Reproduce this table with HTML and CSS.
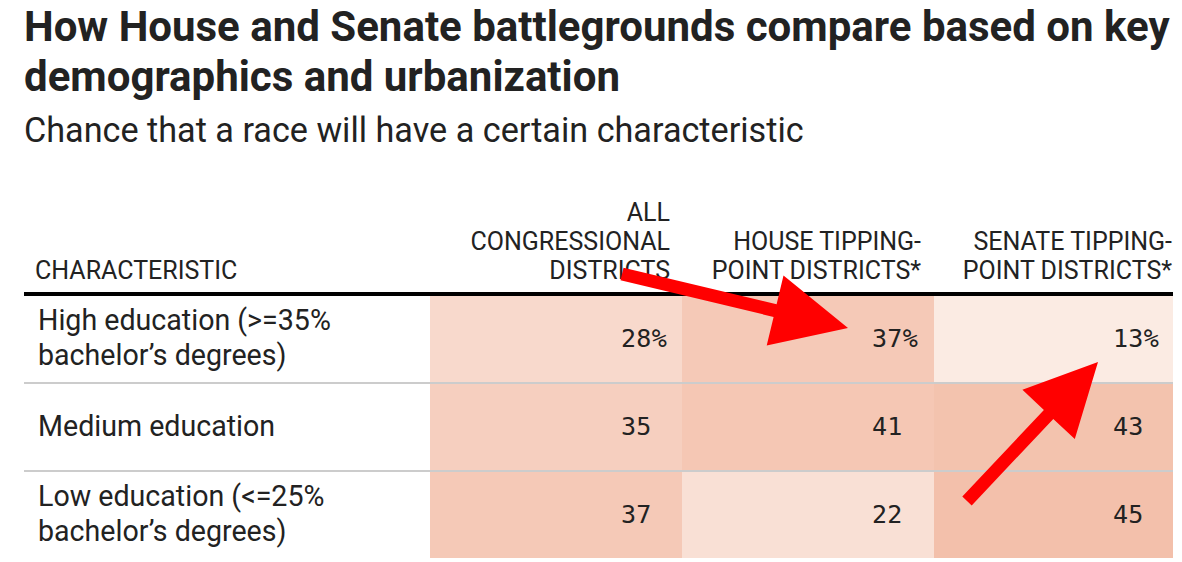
FILE: index.html
```html
<!DOCTYPE html>
<html>
<head>
<meta charset="utf-8">
<link rel="stylesheet" href="styles.css">
</head>
<body>
<div class="chart">
  <h1 class="title">How House and Senate battlegrounds compare based on key<br>demographics and urbanization</h1>
  <p class="subtitle">Chance that a race will have a certain characteristic</p>
  <table class="grid">
    <thead>
      <tr>
        <th class="lbl">CHARACTERISTIC</th>
        <th class="c1">ALL<br>CONGRESSIONAL<br>DISTRICTS</th>
        <th class="c2">HOUSE TIPPING-<br>POINT DISTRICTS*</th>
        <th class="c3">SENATE TIPPING-<br>POINT DISTRICTS*</th>
      </tr>
    </thead>
    <tbody>
      <tr>
        <td class="lbl">High education (&gt;=35%<br>bachelor’s degrees)</td>
        <td class="num c1 s28">28%</td>
        <td class="num c2 s37">37%</td>
        <td class="num c3 s13">13%</td>
      </tr>
      <tr>
        <td class="lbl">Medium education</td>
        <td class="num c1 s35">35<span class="pad">%</span></td>
        <td class="num c2 s41">41<span class="pad">%</span></td>
        <td class="num c3 s43">43<span class="pad">%</span></td>
      </tr>
      <tr>
        <td class="lbl">Low education (&lt;=25%<br>bachelor’s degrees)</td>
        <td class="num c1 s37">37<span class="pad">%</span></td>
        <td class="num c2 s22">22<span class="pad">%</span></td>
        <td class="num c3 s45">45<span class="pad">%</span></td>
      </tr>
    </tbody>
  </table>
</div>
<svg class="arrows" width="1182" height="562" viewBox="0 0 1182 562">
  <polygon points="623.5,267.7 776.6,304.3 783.5,275.6 848,328 766.7,345.6 773.6,316.9 620.5,280.3" fill="#ff0000"/>
  <polygon points="962.3,496.5 1043.9,409.9 1022.4,389.7 1098,362 1074.8,439.1 1053.3,418.9 971.7,505.5" fill="#ff0000"/>
</svg>
</body>
</html>
```
FILE: styles.css
```css
html, body {
  margin: 0;
  padding: 0;
  background: #ffffff;
}
body {
  width: 1182px;
  height: 562px;
  overflow: hidden;
  position: relative;
  font-family: Roboto, "Liberation Sans", sans-serif;
  color: #222222;
}
.chart {
  padding: 0 0 0 24px;
}
.title {
  margin: 0;
  padding-top: 2px;
  font-size: 42px;
  line-height: 50px;
  font-weight: 700;
  letter-spacing: 0;
  white-space: nowrap;
  color: #222222;
}
.subtitle {
  margin: 8px 0 0 0;
  font-size: 34.2px;
  line-height: 40px;
  font-weight: 400;
  white-space: nowrap;
  color: #222222;
}
.grid {
  margin-top: 48px;
  border-collapse: collapse;
  table-layout: fixed;
  width: 1149px;
}
.grid th {
  font-weight: 400;
  font-size: 25px;
  line-height: 29px;
  text-align: right;
  vertical-align: bottom;
  padding: 0 0 7px 0;
  border-bottom: 4px solid #000000;
  color: #222222;
  white-space: nowrap;
}
.grid th.lbl {
  text-align: left;
  padding-left: 11px;
  width: 395px;
}
.grid th.c1 { width: 240px; padding-right: 12px; }
.grid th.c2 { width: 239px; padding-right: 13px; }
.grid th.c3 { width: 238px; padding-right: 1px; }
.grid td {
  height: 84px;
  padding: 0;
  border-top: 2px solid #cccccc;
}
.grid tbody tr:first-child td {
  border-top: none;
}
.grid td.lbl {
  font-size: 28.6px;
  line-height: 35px;
  padding-left: 14px;
  padding-bottom: 2px;
  white-space: nowrap;
}
.grid td.num {
  text-align: right;
  font-family: "DejaVu Sans Mono", monospace;
  font-size: 25px;
  letter-spacing: 0.3px;
  font-weight: 400;
  color: #222222;
  padding-bottom: 2px;
}
.grid td.num.c1 { padding-right: 15px; }
.grid td.num.c2 { padding-right: 16px; }
.grid td.num.c3 { padding-right: 14px; }
.pad { visibility: hidden; }
.s28 { background: #f8d9cc; }
.s37 { background: #f5c9b7; }
.s13 { background: #fbebe3; }
.s35 { background: #f6cfbf; }
.s41 { background: #f5c7b4; }
.s43 { background: #f3c3ae; }
.s22 { background: #f9e0d5; }
.s45 { background: #f3c0ab; }
.arrows {
  position: absolute;
  left: 0;
  top: 0;
  pointer-events: none;
}
```
